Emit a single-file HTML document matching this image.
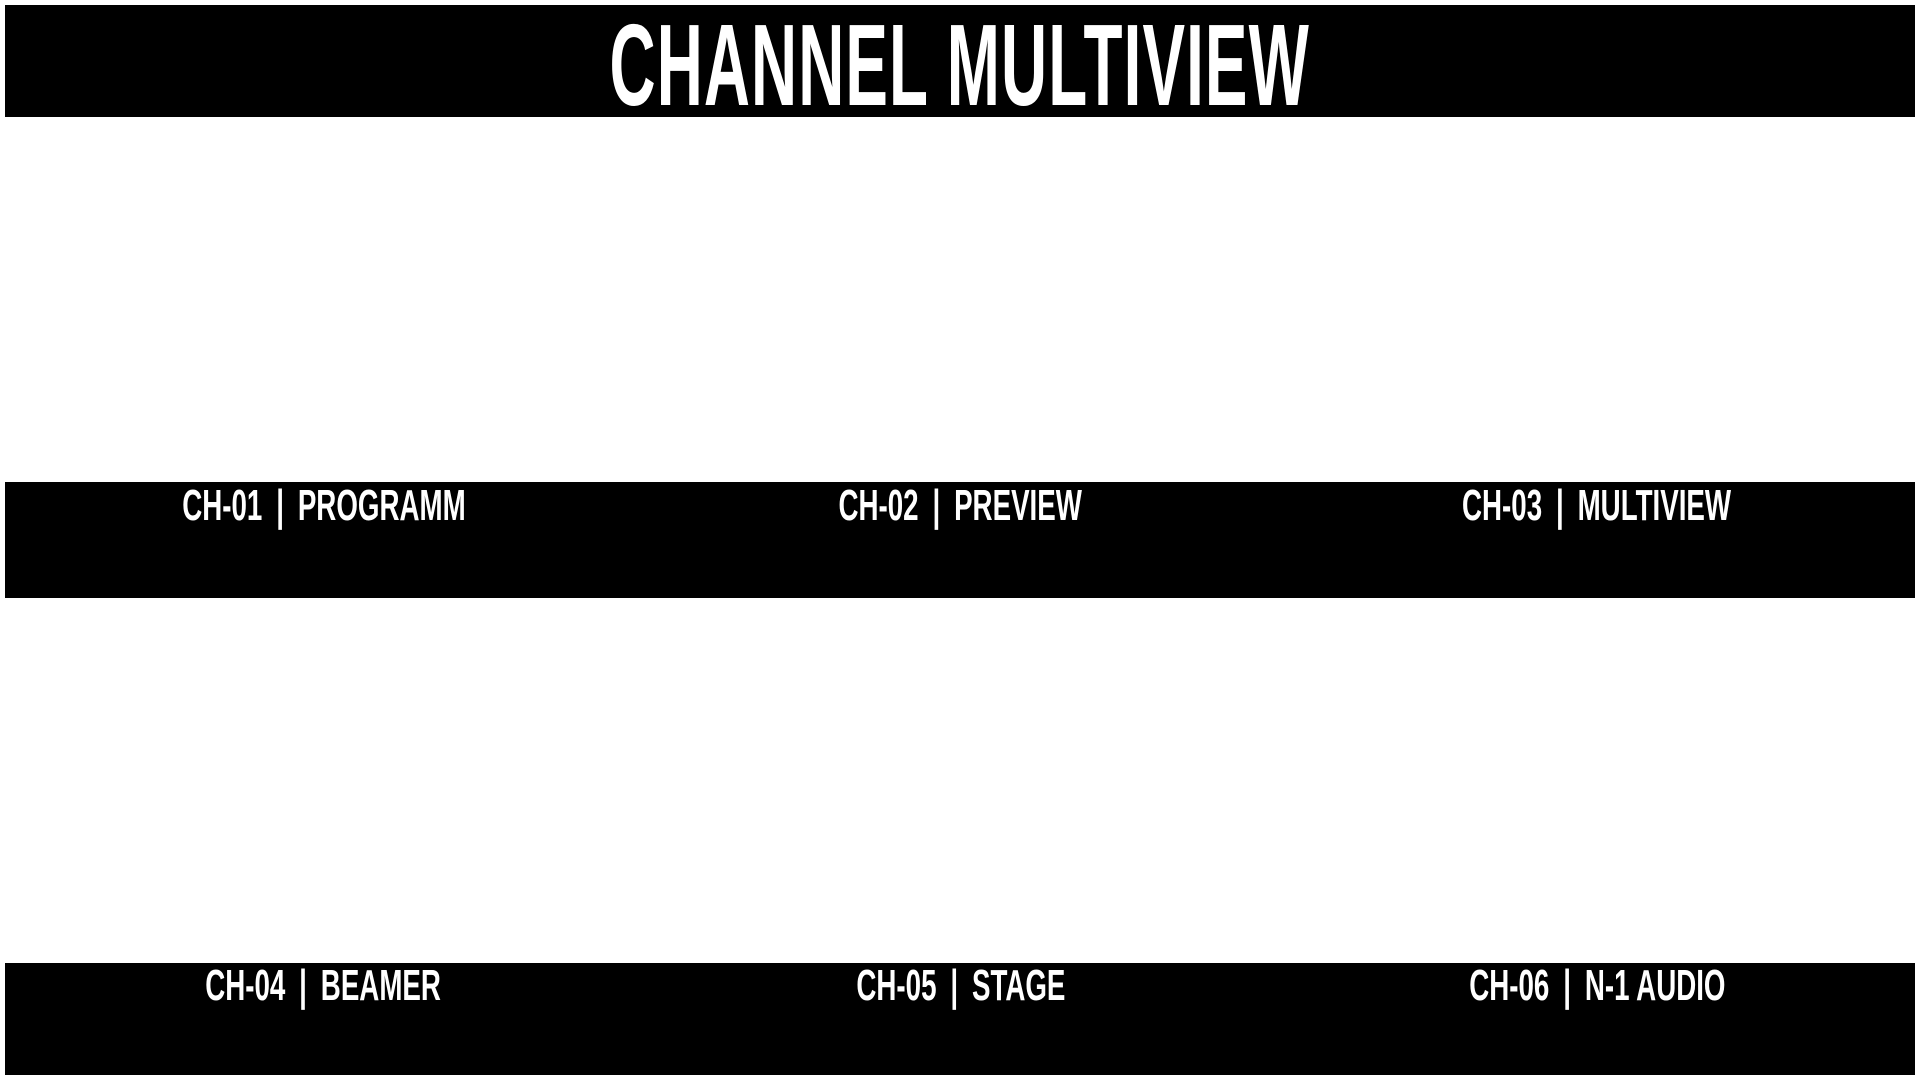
<!DOCTYPE html>
<html><head><meta charset="utf-8"><style>
html,body{margin:0;padding:0;width:1920px;height:1080px;background:#fff;overflow:hidden;font-family:"Liberation Sans",sans-serif;}
.bar{position:absolute;left:5px;width:1910px;background:#000;color:#fff;}
.t{position:absolute;white-space:nowrap;font-weight:bold;transform-origin:center top;}
.t span{display:inline-block;transform:scaleX(0.63);transform-origin:center top;}
.t b{display:inline-block;margin:0 22px;}
</style></head><body>
<div class="bar" style="top:5px;height:112px;"></div>
<div class="t" style="left:0;width:1920px;text-align:center;top:-2px;font-size:116px;color:#fff;"><span style="transform:scaleX(0.55);letter-spacing:2px;">CHANNEL MULTIVIEW</span></div>

<div class="bar" style="top:482px;height:116px;"></div>
<div class="bar" style="top:963px;height:112px;"></div>

<div class="t" style="left:5px;width:637px;text-align:center;top:481px;font-size:44px;color:#fff;"><span>CH-01<b>|</b>PROGRAMM</span></div>
<div class="t" style="left:642px;width:637px;text-align:center;top:481px;font-size:44px;color:#fff;"><span>CH-02<b>|</b>PREVIEW</span></div>
<div class="t" style="left:1279px;width:636px;text-align:center;top:481px;font-size:44px;color:#fff;"><span>CH-03<b>|</b>MULTIVIEW</span></div>

<div class="t" style="left:5px;width:637px;text-align:center;top:961px;font-size:44px;color:#fff;"><span>CH-04<b>|</b>BEAMER</span></div>
<div class="t" style="left:642px;width:637px;text-align:center;top:961px;font-size:44px;color:#fff;"><span>CH-05<b>|</b>STAGE</span></div>
<div class="t" style="left:1279px;width:636px;text-align:center;top:961px;font-size:44px;color:#fff;"><span>CH-06<b>|</b>N-1 AUDIO</span></div>
</body></html>
